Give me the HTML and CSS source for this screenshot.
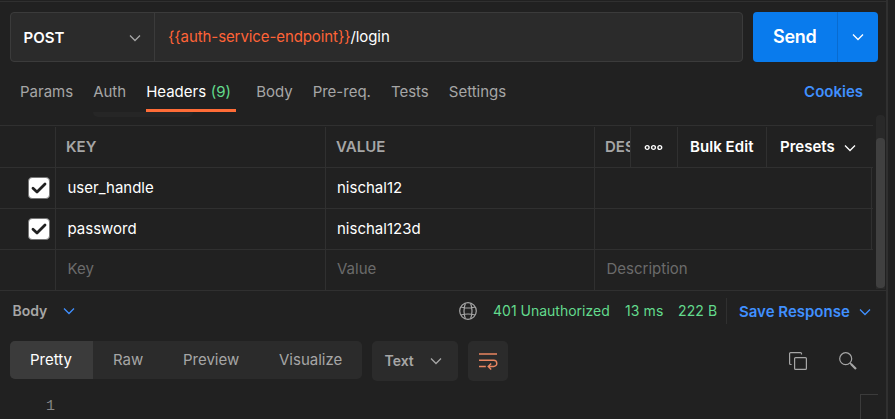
FILE: index.html
```html
<!DOCTYPE html>
<html lang="en">
<head>
<meta charset="utf-8">
<title>Request</title>
<link rel="stylesheet" href="styles.css">
</head>
<body>
<svg class="defs" width="0" height="0">
  <symbol id="chevron" viewBox="0 0 12 8"><path d="M1 1.5l5 5 5-5" fill="none" stroke="currentColor" stroke-width="1.3"/></symbol>
  <symbol id="check" viewBox="0 0 16 12"><path d="M2 6.3l4 3.7L14 2" fill="none" stroke="currentColor" stroke-width="2.8" stroke-linecap="round" stroke-linejoin="round"/></symbol>
</svg>
<main class="pane">
  <div class="request">
    <div class="url-box">
      <div class="method"><b>POST</b><svg class="chevron"><use href="#chevron"/></svg></div>
      <div class="url"><span class="variable">{{auth-service-endpoint}}</span>/login</div>
    </div>
    <div class="send"><b>Send</b><div class="send-more"><svg class="chevron"><use href="#chevron"/></svg></div></div>
  </div>
  <nav class="tabs">
    <span class="tab">Params</span>
    <span class="tab auth">Auth</span>
    <span class="tab active">Headers <i>(9)</i></span>
    <span class="tab">Body</span>
    <span class="tab">Pre-req.</span>
    <span class="tab">Tests</span>
    <span class="tab">Settings</span>
    <span class="cookies">Cookies</span>
  </nav>
  <div class="table-area">
    <div class="table">
      <div class="row head">
        <div class="cell"></div><div class="cell">KEY</div><div class="cell">VALUE</div>
        <div class="head-end">
          <div class="desc">DES</div>
          <div class="dots"><svg width="19" height="7" viewBox="0 0 19 7" fill="none" stroke="currentColor" stroke-width="1.4"><circle cx="3.2" cy="3.5" r="1.9"/><circle cx="9.5" cy="3.5" r="1.9"/><circle cx="15.8" cy="3.5" r="1.9"/></svg></div>
          <div class="bulk">Bulk Edit</div>
          <div class="presets">Presets<svg class="chevron"><use href="#chevron"/></svg></div>
        </div>
      </div>
      <div class="row"><div class="cell"><span class="box"><svg width="16" height="12"><use href="#check"/></svg></span></div><div class="cell">user_handle</div><div class="cell">nischal12</div><div class="cell last"></div></div>
      <div class="row"><div class="cell"><span class="box"><svg width="16" height="12"><use href="#check"/></svg></span></div><div class="cell">password</div><div class="cell">nischal123d</div><div class="cell last"></div></div>
      <div class="row empty"><div class="cell"></div><div class="cell">Key</div><div class="cell">Value</div><div class="cell">Description</div></div>
    </div>
    <div class="track"><div class="thumb"></div></div>
  </div>
  <div class="response">
    <b class="body-label">Body</b><svg class="chevron blue"><use href="#chevron"/></svg>
    <svg class="globe" width="18" height="18" viewBox="0 0 18 18" fill="none" stroke="currentColor" stroke-width="1.2"><circle cx="9" cy="9" r="8.3"/><path d="M6.4 1.2Q3.6 9 6.4 16.8M11.6 1.2Q14.4 9 11.6 16.8M1.8 5Q9 7 16.2 5M1.8 13Q9 11 16.2 13"/></svg>
    <span class="status">401 Unauthorized</span><span class="time">13 ms</span><span class="size">222 B</span>
    <div class="save"><b>Save Response</b><svg class="chevron"><use href="#chevron"/></svg></div>
  </div>
  <div class="toolbar">
    <div class="views"><span class="view selected">Pretty</span><span class="view raw">Raw</span><span class="view preview">Preview</span><span class="view">Visualize</span></div>
    <div class="format"><b>Text</b><svg class="chevron"><use href="#chevron"/></svg></div>
    <div class="wrap"><svg width="20" height="19" viewBox="0 0 20 19" fill="none" stroke="currentColor" stroke-width="1.4"><path d="M1 2h18M1 8.3h14.7a3.1 3.1 0 0 1 0 6.2H10.5M1 14.5h6.8M13.2 11.5l-3 3 3 3"/></svg></div>
    <svg class="copy" width="18" height="18" viewBox="0 0 18 18" fill="none" stroke="currentColor" stroke-width="1.2"><rect x="5.6" y="5.6" width="11.8" height="11.8" rx="1"/><path d="M12.5 2.5V1.6a1 1 0 0 0-1-1H1.6a1 1 0 0 0-1 1v9.9a1 1 0 0 0 1 1h1"/></svg>
    <svg class="search" width="18" height="18" viewBox="0 0 18 18" fill="none" stroke="currentColor" stroke-width="1.2"><circle cx="6.7" cy="6.7" r="6"/><path d="M11 11l1.5 1.5"/><path d="M12 12l5 5" stroke-width="2.2"/></svg>
  </div>
  <div class="code"><span class="line-no">1</span><span class="minimap"></span></div>
</main>
</body>
</html>
```
FILE: styles.css
```css
* { box-sizing: border-box; }
body { margin: 0; width: 895px; height: 419px; overflow: hidden; background: #212121; color: #fff; font: 15px/20px Inter, "Liberation Sans", sans-serif; }
b { font-weight: 600; }
i { font-style: normal; color: #63db8d; margin-left: 0.5px; }
svg { display: block; flex: none; }
.defs { position: absolute; }
.chevron { width: 12px; height: 8px; }
.pane { width: 888px; height: 419px; padding-top: 1px; border-right: 2px solid #303030; overflow: hidden; }
.request { height: 61px; border-top: 1px solid #303030; padding: 10px 0 0 10px; display: flex; gap: 10px; }
.url-box { display: flex; width: 733px; height: 50px; background: #2b2b2b; border: 1px solid #3b3b3b; border-radius: 4px; }
.method { width: 144px; padding: 1px 13px 0 12.5px; border-right: 1px solid #3b3b3b; display: flex; align-items: center; justify-content: space-between; color: #fff; }
.method .chevron { color: #a6a6a6; }
.url { padding: 14px 0 0 13px; letter-spacing: -0.09px; }
.variable { color: #ff6337; }
.send { display: flex; align-items: center; width: 125px; height: 50px; background: #097bed; border-radius: 4px; font-size: 18px; }
.send b { width: 84px; padding-left: 20px; letter-spacing: -0.3px; }
.send-more { flex: 1; height: 50px; border-left: 1px solid #086bd0; display: flex; align-items: center; justify-content: center; }
.tabs { display: flex; gap: 20px; height: 53px; padding: 20px 23px 0 20px; color: #a6a6a6; position: relative; }
.tab { height: 30px; }
.active { width: 90px; color: #fff; border-bottom: 3px solid #ff6c37; }
.auth::after { content: ""; position: absolute; left: 93px; top: 50px; width: 100px; height: 5px; background: #262626; border-radius: 0 0 10px 10px; }
.cookies { margin-left: auto; font-weight: 600; color: #4090ff; }
.table-area { display: flex; height: 176px; border-bottom: 1px solid #303030; }
.table { width: 873px; margin-top: 10px; border-top: 1px solid #303030; }
.row { display: grid; grid-template-columns: 56px 270px 269px 277px; height: 41px; border-bottom: 1px solid #303030; }
.head { height: 42px; padding-top: 1px; color: #a6a6a6; font-weight: 600; }
.cell { border-right: 1px solid #303030; padding: 10px 0 0 11.5px; }
.cell:nth-child(3) { padding-left: 11px; }
.row.head .cell { padding-left: 10px; }
.empty { border-bottom: 0; color: #6b6b6b; }
.empty .cell { padding-top: 9px; }
.empty .cell:last-child { border-right: 0; }
.box { display: flex; align-items: center; justify-content: center; width: 22px; height: 22px; margin: -1px 0 0 16px; border-radius: 4px; background: #fff; color: #212121; border: 1px solid #777; }
.head-end { display: flex; width: 278px; color: #fff; }
.head-end > div { border-right: 1px solid #303030; padding-top: 10px; }
.head-end .desc { width: 36px; padding-left: 10px; overflow: hidden; color: #a6a6a6; }
.head-end .dots { width: 47px; padding: 17px 0 0 13px; }
.head-end .bulk { width: 89px; padding-left: 12px; letter-spacing: 0.06px; }
.head-end .presets { flex: 1; display: flex; border-right: 0; padding-left: 13px; }
.presets .chevron { margin: 7px 0 0 9px; }
.track { width: 9px; margin-left: 3px; padding-top: 23px; background: #292929; border-radius: 4px 4px 0 0; height: 174px; }
.thumb { height: 150px; background: #404040; border-radius: 4px; }
.response { display: flex; align-items: center; height: 40px; padding-left: 12px; font-size: 14px; color: #63db8d; }
.body-label { width: 51px; padding-left: 0.5px; color: #a6a6a6; }
.blue { color: #4090ff; }
.globe { margin-left: 384px; color: #a6a6a6; }
.status { width: 132px; margin-left: 16px; }
.time { width: 53px; letter-spacing: 0.1px; }
.size { width: 48px; letter-spacing: 0.1px; }
.save { display: flex; align-items: center; height: 26px; border-left: 1px solid #303030; padding: 2px 0 0 12px; color: #4090ff; font-size: 15px; }
.save b { width: 120px; }
.toolbar { display: flex; height: 63px; padding: 10px 0 0 10px; color: #a6a6a6; }
.views { display: flex; width: 352px; height: 38px; background: #2b2b2b; border-radius: 5px; overflow: hidden; line-height: 38px; }
.view { padding-left: 20px; }
.selected { width: 83px; background: #3b3b3b; color: #fff; }
.raw { width: 70px; }
.preview { width: 96px; }
.format, .wrap { height: 40px; border-radius: 5px; background: #2b2b2b; margin-left: 10px; display: flex; align-items: center; }
.format { width: 86px; padding: 0 16px 0 12.5px; justify-content: space-between; font-size: 14px; }
.wrap { width: 40px; padding: 1px 0 0 10px; color: #e98560; }
.copy { margin: 11px 0 0 281px; }
.search { margin: 11px 0 0 32px; }
.code { display: flex; justify-content: space-between; height: 25px; padding: 0 8px 0 46px; }
.line-no { padding-top: 2px; color: #858585; font: 15px/22px "Liberation Mono", monospace; }
.minimap { width: 18px; height: 25px; border: solid #3b3b3b; border-width: 1px 0 0 1px; }
```
